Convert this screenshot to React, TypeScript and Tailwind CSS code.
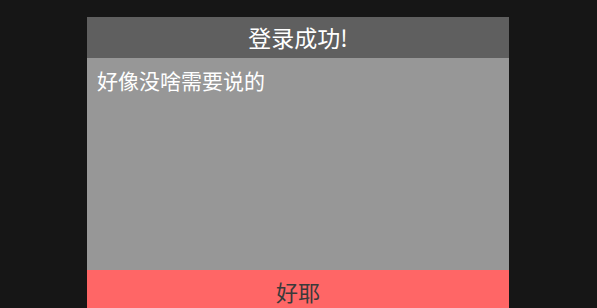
export default function App() {
  return (
    <div
      className="w-[597px] h-[308px] bg-[#161616] overflow-hidden pt-[17px]"
      style={{ fontFamily: '"Noto Sans CJK SC", "Noto Sans", sans-serif' }}
    >
      <div className="ml-[87px] w-[422px] flex flex-col">
        {/* Title */}
        <div className="h-[41px] bg-[#5f5f5f] flex items-center justify-center text-white text-[23px] leading-none">
          登录成功!
        </div>
        {/* Body */}
        <div className="h-[212px] bg-[#979797] px-[10px] pt-[8px] text-white text-[21px] leading-snug">
          好像没啥需要说的
        </div>
        {/* Button */}
        <div className="h-[42px] bg-[#ff6666] flex items-center justify-center text-[#3a3a3a] text-[22px] leading-none">
          好耶
        </div>
      </div>
    </div>
  );
}
